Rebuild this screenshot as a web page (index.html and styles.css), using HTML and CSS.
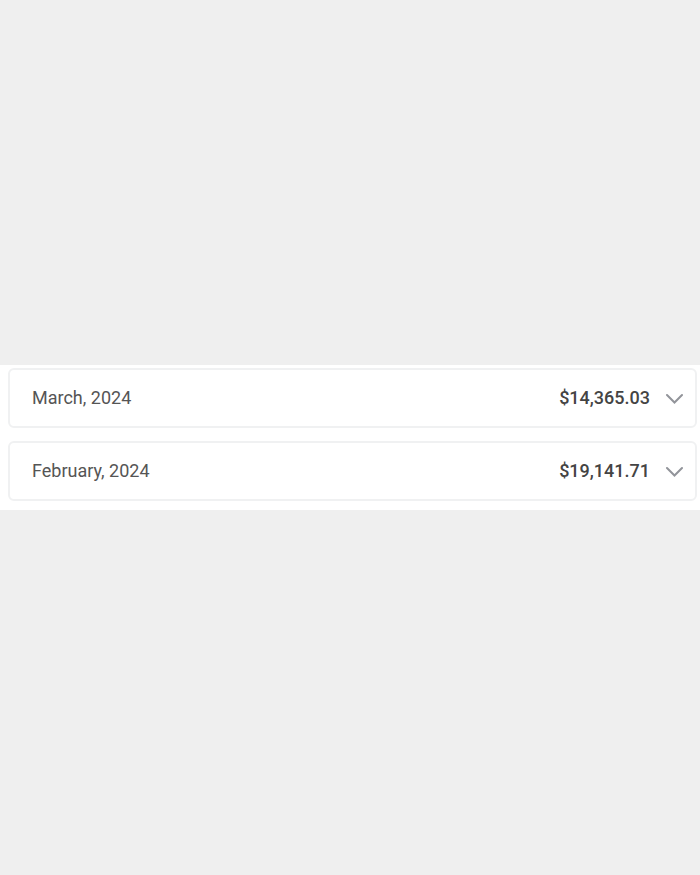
FILE: index.html
```html
<!DOCTYPE html>
<html lang="en">
<head>
<meta charset="utf-8">
<meta name="viewport" content="width=device-width, initial-scale=1">
<title>Monthly totals</title>
<link rel="stylesheet" href="styles.css">
</head>
<body>
<main class="months">
  <button class="month" type="button" aria-expanded="false">
    <span class="month-name">March, 2024</span>
    <span class="month-total">$14,365.03</span>
    <svg class="chevron" viewBox="0 0 18 12" aria-hidden="true"><path d="M2 3 9.5 10.5 17 3"/></svg>
  </button>
  <button class="month" type="button" aria-expanded="false">
    <span class="month-name">February, 2024</span>
    <span class="month-total">$19,141.71</span>
    <svg class="chevron" viewBox="0 0 18 12" aria-hidden="true"><path d="M2 3 9.5 10.5 17 3"/></svg>
  </button>
</main>
</body>
</html>
```
FILE: styles.css
```css
* {
  box-sizing: border-box;
}

body {
  display: flex;
  flex-direction: column;
  justify-content: center;
  min-height: 100vh;
  margin: 0;
  background: #efefef;
  font-family: Roboto, "Liberation Sans", sans-serif;
}

.months {
  display: flex;
  flex-direction: column;
  gap: 13px;
  padding: 3px 3px 9px 8px;
  background: #fff;
}

.month {
  display: flex;
  align-items: center;
  width: 100%;
  padding: 18px 12px 18px 22px;
  border: 2px solid #f0f1f2;
  border-radius: 6px;
  background: #fff;
  color: #555;
  font: inherit;
  font-size: 18px;
  line-height: 20px;
  text-align: left;
  cursor: pointer;
}

.month-name {
  flex: 1;
}

.month-total {
  color: #444;
  font-weight: 500;
}

.chevron {
  width: 18px;
  height: 12px;
  margin-left: 15px;
  fill: none;
  stroke: #92949a;
  stroke-width: 2;
  stroke-linecap: round;
}
```
